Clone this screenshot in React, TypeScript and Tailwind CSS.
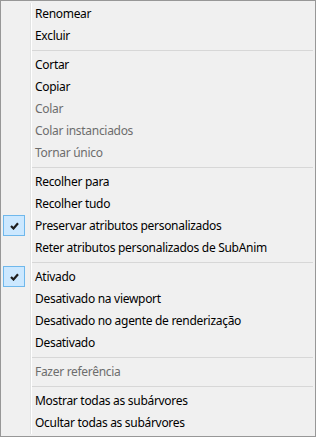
import React from 'react';

type Item =
  | { kind: 'sep' }
  | { kind: 'item'; label: string; disabled?: boolean; checked?: boolean };

const ITEMS: Item[] = [
  { kind: 'item', label: 'Renomear' },
  { kind: 'item', label: 'Excluir' },
  { kind: 'sep' },
  { kind: 'item', label: 'Cortar' },
  { kind: 'item', label: 'Copiar' },
  { kind: 'item', label: 'Colar', disabled: true },
  { kind: 'item', label: 'Colar instanciados', disabled: true },
  { kind: 'item', label: 'Tornar único', disabled: true },
  { kind: 'sep' },
  { kind: 'item', label: 'Recolher para' },
  { kind: 'item', label: 'Recolher tudo' },
  { kind: 'item', label: 'Preservar atributos personalizados', checked: true },
  { kind: 'item', label: 'Reter atributos personalizados de SubAnim' },
  { kind: 'sep' },
  { kind: 'item', label: 'Ativado', checked: true },
  { kind: 'item', label: 'Desativado na viewport' },
  { kind: 'item', label: 'Desativado no agente de renderização' },
  { kind: 'item', label: 'Desativado' },
  { kind: 'sep' },
  { kind: 'item', label: 'Fazer referência', disabled: true },
  { kind: 'sep' },
  { kind: 'item', label: 'Mostrar todas as subárvores' },
  { kind: 'item', label: 'Ocultar todas as subárvores' },
];

// linha vertical da calha (cinza + branco)
function GutterLine() {
  return (
    <>
      <div className="w-px shrink-0 bg-[#e2e3e3]" />
      <div className="w-px shrink-0 bg-white" />
    </>
  );
}

function Check() {
  return (
    <svg width="9" height="8" viewBox="0 0 9 8">
      <path d="M1 4 L3.5 6.5 L8 1.2" fill="none" stroke="#1e1e1e" strokeWidth="2.2" />
    </svg>
  );
}

export default function App() {
  return (
    <div
      className="w-[316px] h-[437px] border border-[#979797] bg-[#f0f0f0] p-[2px] flex flex-col text-[12px] leading-none tracking-[-0.3px]"
      style={{ fontFamily: '"Noto Sans", "Open Sans", sans-serif' }}
    >
      {ITEMS.map((it, i) =>
        it.kind === 'sep' ? (
          <div key={i} className="flex h-[7px]">
            <div className="w-[27px] shrink-0" />
            <GutterLine />
            <div className="flex-1 flex flex-col justify-center">
              <div className="h-px bg-[#d7d7d7]" />
            </div>
          </div>
        ) : (
          <div key={i} className="flex h-[22px]">
            <div className="w-[27px] shrink-0 flex items-start">
              {it.checked && (
                <div className="w-[22px] h-[21px] border border-[#6fb8ec] bg-[#cce8ff] flex items-center justify-center">
                  <Check />
                </div>
              )}
            </div>
            <GutterLine />
            <div
              className={`flex-1 flex items-center pl-[3px] whitespace-nowrap ${
                it.disabled ? 'text-[#6d6d6d]' : 'text-black'
              }`}
            >
              {it.label}
            </div>
          </div>
        )
      )}
    </div>
  );
}
